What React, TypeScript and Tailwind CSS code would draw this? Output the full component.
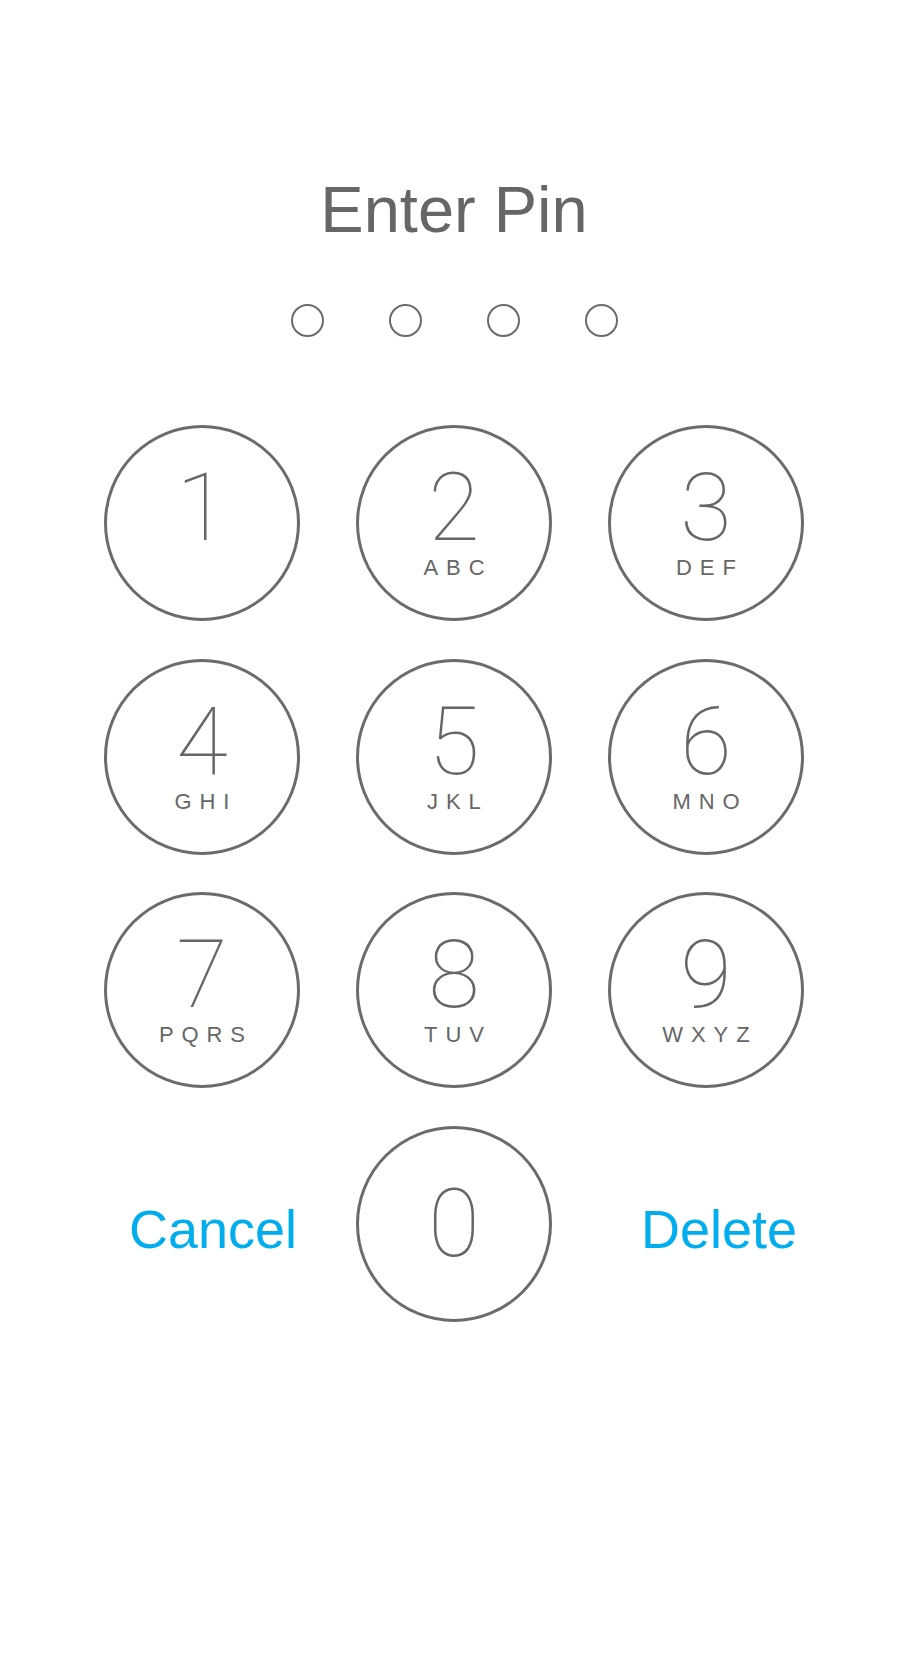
import React from 'react';

const keys = [
  { digit: '1', letters: '' },
  { digit: '2', letters: 'ABC' },
  { digit: '3', letters: 'DEF' },
  { digit: '4', letters: 'GHI' },
  { digit: '5', letters: 'JKL' },
  { digit: '6', letters: 'MNO' },
  { digit: '7', letters: 'PQRS' },
  { digit: '8', letters: 'TUV' },
  { digit: '9', letters: 'WXYZ' },
];

const digitFont = { fontFamily: 'Roboto, "Liberation Sans", sans-serif' };

const Key = ({ digit, letters }: { digit: string; letters: string }) => (
  <button className="w-[196px] h-[196px] rounded-full border-[3px] border-[#6b6b6b] bg-white flex flex-col items-center pt-[33px]">
    <span style={digitFont} className="text-[94px] leading-none font-thin text-[#666]">
      {digit}
    </span>
    {letters && (
      <span className="mt-[2px] text-[22px] leading-none tracking-[0.36em] pl-[0.36em] text-[#666] font-['Liberation_Sans',sans-serif]">
        {letters}
      </span>
    )}
  </button>
);

const App = () => {
  return (
    <div className="min-h-screen bg-white flex flex-col items-center pr-[14px] font-['Liberation_Sans',Arial,sans-serif]">
      <h1 className="mt-[177px] text-[65px] leading-none text-[#666]">Enter Pin</h1>

      <div className="mt-[62px] flex gap-[65px]">
        {[0, 1, 2, 3].map((i) => (
          <div key={i} className="w-[33px] h-[33px] rounded-full border-[2.5px] border-[#6b6b6b]" />
        ))}
      </div>

      <div className="mt-[88px] grid grid-cols-[196px_196px_196px] gap-x-[56px] gap-y-[37.5px]">
        {keys.map((k) => (
          <Key key={k.digit} digit={k.digit} letters={k.letters} />
        ))}

        <div className="h-[196px] flex justify-center pl-[22px] pt-[76px]">
          <span className="text-[54px] leading-none text-[#00aeef]">Cancel</span>
        </div>
        <button className="w-[196px] h-[196px] rounded-full border-[3px] border-[#6b6b6b] bg-white flex items-center justify-center">
          <span style={digitFont} className="text-[94px] leading-none font-thin text-[#666]">
            0
          </span>
        </button>
        <div className="h-[196px] flex justify-center pl-[26px] pt-[76px]">
          <span className="text-[54px] leading-none text-[#00aeef]">Delete</span>
        </div>
      </div>
    </div>
  );
};

export default App;
